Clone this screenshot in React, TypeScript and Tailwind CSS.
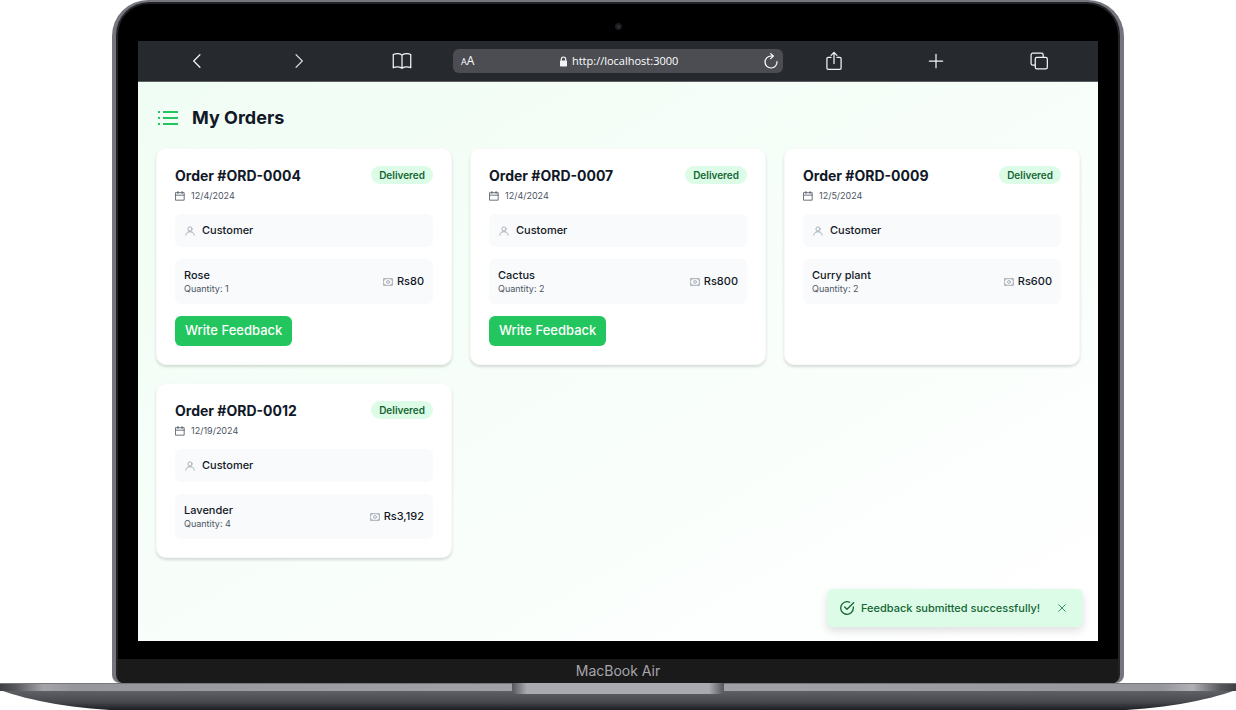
import React, { useState } from 'react';

type IconProps = { className?: string; children: React.ReactNode; width?: number };

const Icon: React.FC<IconProps> = ({ className, children, width = 1.5 }) => (
  <svg
    className={className}
    viewBox="0 0 24 24"
    fill="none"
    stroke="currentColor"
    strokeWidth={width}
    strokeLinecap="round"
    strokeLinejoin="round"
    aria-hidden="true"
  >
    {children}
  </svg>
);

const orders = [
  { id: 'ORD-0004', date: '12/4/2024', plant: 'Rose', quantity: 1, total: 'Rs80', canReview: true },
  { id: 'ORD-0007', date: '12/4/2024', plant: 'Cactus', quantity: 2, total: 'Rs800', canReview: true },
  { id: 'ORD-0009', date: '12/5/2024', plant: 'Curry plant', quantity: 2, total: 'Rs600', canReview: false },
  { id: 'ORD-0012', date: '12/19/2024', plant: 'Lavender', quantity: 4, total: 'Rs3,192', canReview: false }
];

const ToolButton: React.FC<{ label: string; children: React.ReactNode }> = ({ label, children }) => (
  <button type="button" aria-label={label} className="flex flex-1 items-center justify-center text-gray-100">
    {children}
  </button>
);

const BrowserBar: React.FC = () => (
  <div className="flex h-[41px] items-center border-b border-[#5b5d61] bg-[#262a2e] px-2">
    <ToolButton label="Back">
      <Icon className="h-5 w-5"><path d="M15.5 4.5L8 12l7.5 7.5" /></Icon>
    </ToolButton>
    <ToolButton label="Forward">
      <Icon className="h-5 w-5 text-gray-300"><path d="M8.5 4.5L16 12l-7.5 7.5" /></Icon>
    </ToolButton>
    <ToolButton label="Bookmarks">
      <Icon className="h-5 w-5">
        <path d="M12 5C10 3 5 2.5 1.5 4.2V20c3.5-1.5 8.5-1.2 10.5.8 2-2 7-2.3 10.500-.8V4.2C19 2.5 14 3 12 5zM12 5v15.8" />
      </Icon>
    </ToolButton>

    <div className="flex h-6 w-[330px] items-center justify-between rounded-md bg-[#4b4d52] px-2 font-['Open_Sans',sans-serif] text-white">
      <button type="button" aria-label="Text size" className="flex items-baseline leading-4">
        <span className="text-[9px]">A</span>
        <span className="text-xs">A</span>
      </button>
      <div className="flex items-center gap-1 text-[11px] leading-4">
        <svg className="h-[11px] w-[9px]" viewBox="0 0 9 11" aria-hidden="true">
          <path d="M2.3 5V3.2a2.2 2.2 0 0 1 4.4 0V5" fill="none" stroke="#f3f4f6" strokeWidth="1.2" />
          <rect x="1" y="4.6" width="7" height="5.9" rx="0.8" fill="#f3f4f6" />
        </svg>
        <span>http://localhost:3000</span>
      </div>
      <button type="button" aria-label="Reload" className="-mr-1">
        <Icon className="h-4 w-4" width={1.8}>
          <path d="M21 13a9 9 0 1 1-9-8.500h3M11.500 1l4 3.500-4 4" />
        </Icon>
      </button>
    </div>

    <ToolButton label="Share">
      <Icon className="h-5 w-5">
        <path d="M8.5 7.5H5A1.5 1.5 0 0 0 3.5 9v11.5A1.5 1.5 0 0 0 5 22h14a1.5 1.5 0 0 0 1.5-1.5V9A1.5 1.5 0 0 0 19 7.500h-3.5M12 15V2M8.5 5.2L12 1.7l3.5 3.5" />
      </Icon>
    </ToolButton>
    <ToolButton label="New tab">
      <Icon className="h-5 w-5"><path d="M12 4v16M4 12h16" /></Icon>
    </ToolButton>
    <ToolButton label="Tabs">
      <Icon className="h-5 w-5">
        <rect x="7.5" y="7.5" width="14.5" height="14" rx="2" />
        <path d="M7.5 17h-3a2 2 0 0 1-2-2V4.5a2 2 0 0 1 2-2H15a2 2 0 0 1 2 2v3" />
      </Icon>
    </ToolButton>
  </div>
);

const OrderCard: React.FC<{ order: (typeof orders)[number] }> = ({ order }) => (
  <article className="rounded-[10px] border border-[#f8faf9] bg-white px-[18px] pt-[17px] pb-[18px] shadow-[0_2px_3px_rgba(0,0,0,0.14)]">
    <div className="mb-2.5 flex items-start justify-between">
      <div>
        <h2 className="text-sm leading-5 font-bold text-[#111827]">Order #{order.id}</h2>
        <p className="mt-0.5 flex items-center gap-1.5 text-[9px] leading-4 text-[#4b5563]">
          <Icon className="h-2.5 w-2.5" width={2}>
            <path d="M2 4h20v18H2zM2 10h20M7 1v5M17 1v5" />
          </Icon>
          {order.date}
        </p>
      </div>
      <span className="rounded-full bg-[#dcfce7] px-2 text-[10px] leading-[18px] font-semibold text-[#166534]">Delivered</span>
    </div>

    <div className="mb-3 flex h-[33px] items-center gap-[7px] rounded-md bg-[#f9fafb] px-2.5 text-[11px] font-medium text-[#111827]">
      <Icon className="h-2.5 w-2.5 text-[#9ca3af]" width={2}>
        <circle cx="12" cy="7" r="5" />
        <path d="M2 22c0-4 2-6.500 5.500-7.500M22 22c0-4-2-6.500-5.500-7.500M7.500 14.500c3-1 6-1 9 0" />
      </Icon>
      Customer
    </div>

    <div className="flex h-[45px] items-center justify-between rounded-md bg-[#f9fafb] px-[9px]">
      <div>
        <p className="text-[11px] leading-[14px] font-medium text-[#111827]">{order.plant}</p>
        <p className="text-[9px] leading-[14px] text-[#4b5563]">Quantity: {order.quantity}</p>
      </div>
      <p className="flex items-center gap-1 text-[11px] font-medium text-[#111827]">
        <Icon className="h-2.5 w-2.5 text-[#9ca3af]" width={2}>
          <path d="M1.5 4h21v16h-21zM1.5 8c2 0 4-2 4-4M22.5 8c-2 0-4-2-4-4M1.5 16c2 0 4 2 4 4M22.5 16c-2 0-4 2-4 4" />
          <circle cx="12" cy="12" r="3.5" />
        </Icon>
        {order.total}
      </p>
    </div>

    {order.canReview && (
      <button type="button" className="mt-3 h-[30px] rounded-md bg-[#22c55e] px-2.5 text-[13px] font-medium text-white">
        Write Feedback
      </button>
    )}
  </article>
);

const LaptopBase: React.FC = () => (
  <svg className="block h-7 w-full" viewBox="0 0 1236 28" preserveAspectRatio="none" aria-hidden="true">
    <defs>
      <linearGradient id="deck" x1="0" x2="1" y1="0" y2="0">
        <stop offset="0" stopColor="#3f4044" />
        <stop offset="0.012" stopColor="#55565a" />
        <stop offset="0.035" stopColor="#a3a3a8" />
        <stop offset="0.06" stopColor="#96979c" />
        <stop offset="0.5" stopColor="#a3a4a9" />
        <stop offset="0.94" stopColor="#96979c" />
        <stop offset="0.965" stopColor="#b0b0b5" />
        <stop offset="0.988" stopColor="#55565a" />
        <stop offset="1" stopColor="#3f4044" />
      </linearGradient>
      <linearGradient id="belly" x1="0" x2="0" y1="0" y2="1">
        <stop offset="0" stopColor="#606267" />
        <stop offset="0.55" stopColor="#484a50" />
        <stop offset="1" stopColor="#17191f" />
      </linearGradient>
      <linearGradient id="notch" x1="0" x2="1" y1="0" y2="0">
        <stop offset="0" stopColor="#55565b" />
        <stop offset="0.07" stopColor="#a9aaaf" />
        <stop offset="0.93" stopColor="#a9aaaf" />
        <stop offset="1" stopColor="#55565b" />
      </linearGradient>
    </defs>
    <path d="M0 7C30 18 75 26 130 28H1106C1161 26 1206 18 1236 7z" fill="url(#belly)" />
    <path d="M0 0H1236V8H0z" fill="url(#deck)" />
    <path d="M0 0H1236V1H0z" fill="#77787d" />
    <path d="M512 0H724V6Q724 11 719 11H517Q512 11 512 6z" fill="url(#notch)" />
  </svg>
);

const App: React.FC = () => {
  const [showToast, setShowToast] = useState(true);

  return (
    <div className="min-h-screen overflow-hidden bg-white font-['Inter',sans-serif]">
      {/* Lid */}
      <div className="mx-28 rounded-t-[36px] rounded-b-lg bg-[#74757d] px-1 pt-0.5">
        <div className="overflow-hidden rounded-t-[33px] rounded-b-lg border-x-2 border-t-2 border-[#222327] bg-black">
          <div className="flex h-[37px] items-center justify-center pt-2">
            <span className="h-[7px] w-[7px] rounded-full border-2 border-[#1a1b1f] bg-[#303238]" />
          </div>

          {/* Screen */}
          <div className="mx-5">
            <BrowserBar />
            <main className="relative min-h-[559px] bg-linear-to-br from-[#f0fdf4] to-white px-[18px] pt-[23px]">
              <header className="mb-[17px] flex items-center gap-3">
                <svg className="ml-0.5 h-4 w-[22px] text-[#22c55e]" viewBox="0 0 22 16" fill="currentColor" aria-hidden="true">
                  <path d="M0 1h2v2H0zM5 1h15v2H5zM0 7h2v2H0zM5 7h15v2H5zM0 13h2v2H0zM5 13h15v2H5z" />
                </svg>
                <h1 className="text-lg leading-[26px] font-bold text-[#111827]">My Orders</h1>
              </header>

              <div className="grid grid-cols-3 gap-[18px]">
                {orders.map((order) => (
                  <OrderCard key={order.id} order={order} />
                ))}
              </div>

              {showToast && (
                <div
                  role="status"
                  className="absolute right-[15px] bottom-3.5 flex h-[38px] w-64 items-center rounded-md bg-[#dcfce7] px-3 text-[#166534] shadow-[0_4px_8px_rgba(0,0,0,0.12)]"
                >
                  <Icon className="mr-1.5 h-4 w-4" width={2}>
                    <path d="M21.5 10.500V12A9.500 9.500 0 1 1 16 3.400M22 4L12 14l-3.500-3.500" />
                  </Icon>
                  <span className="text-[11px] font-medium">Feedback submitted successfully!</span>
                  <button type="button" aria-label="Close" className="mr-1 ml-auto" onClick={() => setShowToast(false)}>
                    <Icon className="h-2.5 w-2.5 text-[#15803d]" width={2}><path d="M4 4l16 16M20 4L4 20" /></Icon>
                  </button>
                </div>
              )}
            </main>
          </div>

          <div className="mt-[18px] flex h-6 items-center justify-center bg-[#1a1a1a] text-sm leading-6 text-[#a5a5aa]">
            MacBook Air
          </div>
        </div>
      </div>

      <LaptopBase />
    </div>
  );
};

export default App;
